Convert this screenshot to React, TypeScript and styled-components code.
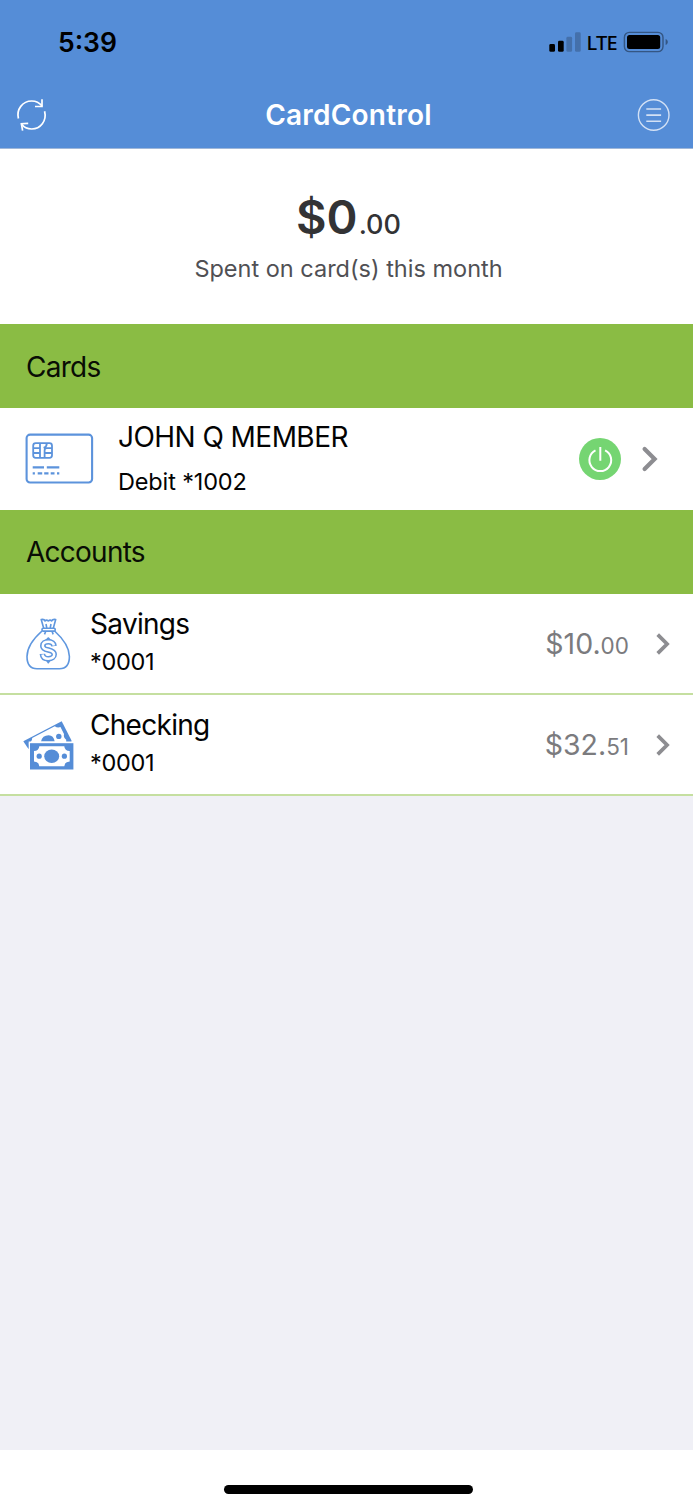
import React from "react";
import styled, { createGlobalStyle } from "styled-components";

const GlobalStyle = createGlobalStyle`
  *, *::before, *::after { box-sizing: border-box; }
  html, body { margin: 0; padding: 0; background: #fff; }
  body { font-family: Inter, "Liberation Sans", sans-serif; color: #030303; }
  svg { display: block; flex: none; }
`;

const Screen = styled.div`
  display: flex;
  flex-direction: column;
  width: 693px;
  height: 1500px;
  overflow: hidden;
  background: #f0f0f6;
`;

const Header = styled.header`
  height: 149px;
  flex: none;
  background: #558dd7;
  border-bottom: 1px solid #9fb7d9;
`;

const StatusBar = styled.div`
  display: flex;
  align-items: center;
  justify-content: space-between;
  height: 81px;
  padding: 3px 24px 0 58px;
  color: #000;
`;

const StatusIcons = styled.div`
  display: flex;
  align-items: center;
`;

const NavBar = styled.nav`
  display: flex;
  align-items: center;
  justify-content: space-between;
  height: 68px;
  padding: 0 22px 0 15px;
`;

const Text = styled.span<{ $size: number; $weight?: number; $track?: number; $color?: string; $line?: number }>`
  display: block;
  white-space: nowrap;
  font-size: ${(p) => p.$size}px;
  font-weight: ${(p) => p.$weight ?? 400};
  letter-spacing: ${(p) => p.$track ?? 0}px;
  line-height: ${(p) => p.$line ?? 34}px;
  color: ${(p) => p.$color ?? "inherit"};
`;

const NavTitle = styled(Text)`
  padding-left: 11px;
`;

const Carrier = styled(Text)`
  margin: 0 6px 0 5px;
  padding-top: 1px;
  font-family: "Noto Sans", sans-serif;
`;

const Summary = styled.section`
  display: flex;
  flex-direction: column;
  align-items: center;
  height: 175px;
  flex: none;
  padding: 38px 0 0 4px;
  background: #fff;
`;

const Money = styled.div<{ $top?: number; $gap?: number }>`
  display: flex;
  align-items: baseline;
  gap: ${(p) => p.$gap ?? 0}px;
  padding-top: ${(p) => p.$top ?? 0}px;
`;

const SectionHeader = styled.h2<{ $top: number }>`
  display: flex;
  align-items: center;
  height: 84px;
  flex: none;
  margin: 0;
  padding: ${(p) => p.$top}px 0 0 26px;
  background: #8abc44;
`;

const Row = styled.div<{ $height: number; $divided?: boolean; $inset?: number }>`
  display: flex;
  align-items: center;
  height: ${(p) => p.$height}px;
  flex: none;
  padding: 0 ${(p) => p.$inset ?? 22}px 0 24px;
  background: #fff;
  border-bottom: ${(p) => (p.$divided ? "2px solid #c5dfa0" : "none")};
`;

const IconSlot = styled.div<{ $width: number }>`
  display: flex;
  flex: none;
  width: ${(p) => p.$width}px;
`;

const Names = styled.div<{ $gap: number }>`
  display: flex;
  flex-direction: column;
  gap: ${(p) => p.$gap}px;
`;

const Trailing = styled.div<{ $gap: number }>`
  display: flex;
  align-items: center;
  gap: ${(p) => p.$gap}px;
  margin-left: auto;
`;

const HomeArea = styled.footer`
  display: flex;
  justify-content: center;
  height: 50px;
  flex: none;
  margin-top: auto;
  padding: 35px 0 0 4px;
  background: #fff;
`;

const HomeIndicator = styled.div`
  width: 249px;
  height: 9px;
  border-radius: 5px;
  background: #000;
`;

const SignalIcon = () => (
  <svg width="32" height="20" viewBox="0 0 32 20">
    <rect x="0.3" y="12" width="5.7" height="7.8" rx="1.4" />
    <rect x="9" y="8.8" width="5.7" height="11" rx="1.4" />
    <rect x="17.4" y="4.8" width="5.7" height="15" rx="1.4" fill="#4470ab" />
    <rect x="26" y="0.3" width="5.7" height="19.5" rx="1.4" fill="#4470ab" />
  </svg>
);

const BatteryIcon = () => (
  <svg width="46" height="22" viewBox="0 0 46 22">
    <rect x="1.4" y="1.4" width="38.6" height="19.2" rx="5" fill="none" stroke="#345683" strokeWidth="1.4" />
    <rect x="4" y="4" width="33.2" height="14" rx="2.5" />
    <path d="M42.6 8v6c1.4-.5 2.2-1.700 2.200-3s-.8-2.500-2.200-3z" fill="#345683" />
  </svg>
);

const RefreshIcon = () => (
  <svg width="34" height="36" viewBox="0 0 34 36" fill="none" stroke="#fff" strokeWidth="1.7">
    <path d="M3.400 21.500C1.200 12.500 7.500 4 16.700 4c4.300 0 8 2 10.300 5" />
    <path d="M27 2.200v7.300h-7" />
    <path d="M29.600 14.300C32 24 25.500 32 16.700 32c-4.200 0-7.800-1.700-10.200-5" />
    <path d="M7.600 33.700L6.400 26.700l6.800-.4" />
  </svg>
);

const MenuIcon = () => (
  <svg width="34" height="34" viewBox="0 0 34 34" fill="none" stroke="#d3e1f5">
    <circle cx="16.700" cy="17" r="15.300" strokeWidth="1.400" />
    <path d="M9.300 11h14.800M9.300 17.100h14.800M9.300 23.200h14.800" strokeWidth="1.600" />
  </svg>
);

const CardIcon = () => (
  <svg width="70" height="54" viewBox="0 0 70 54" fill="none" stroke="#5c93dc">
    <rect x="2.600" y="2.600" width="65.500" height="47.900" rx="3.500" strokeWidth="2.100" />
    <g strokeWidth="1.800">
      <rect x="9.200" y="11.200" width="18.800" height="14.600" rx="2.500" />
      <path d="M16 11.200v14.600M9.200 16.100H16M9.200 21H16M20.600 25.800V18.500q0-2.300 2.300-2.300H28M20.600 21H28M22.800 11.200q0 3.700-3.200 4.600" />
    </g>
    <path d="M8.700 35.400H20M22.800 35.400H35.300" strokeWidth="2.100" />
    <path d="M8.700 41.400h2.200M13.700 41.400h4.500M20.200 41.400h4.300M26.700 41.400h3.800M33 41.400h2.300" strokeWidth="2.100" />
  </svg>
);

const PowerIcon = () => (
  <svg width="42" height="42" viewBox="0 0 42 42" fill="none" stroke="#fff" strokeWidth="2">
    <circle cx="21" cy="21" r="21" fill="#75d572" stroke="none" />
    <path d="M21.300 9v13.700M16.500 12.400a10.900 10.900 0 1 0 9.600 0" />
  </svg>
);

const CardChevron = () => (
  <svg width="17" height="28" viewBox="0 0 17 28" fill="none" stroke="#8d8d91" strokeWidth="4.200">
    <path d="M3.600 4l10 10-10 10" strokeLinecap="round" />
  </svg>
);

const AccountChevron = () => (
  <svg width="16" height="24" viewBox="0 0 16 24" fill="none" stroke="#8d8d91" strokeWidth="3.700">
    <path d="M2.700 2.600l9.400 9.400-9.400 9.400" />
  </svg>
);

const MoneyBagIcon = () => (
  <svg width="48" height="54" viewBox="0 0 48 54" fill="none" stroke="#5f97df" strokeWidth="1.600" strokeLinejoin="round">
    <path d="M18 14C13.500 18 3 27.500 3 39.500C3 47 6.500 51.700 13 51.700h22.500c6.500 0 9.900-4.700 9.900-12.200C45.400 27.500 35 18 30.600 14" />
    <rect x="18" y="11.300" width="13.200" height="2.800" rx="1.200" />
    <path d="M19.700 11.300L17.200 2.500q3.300-.5 3.800 1.500q1.500-1.700 3.300 0q1.900-1.700 3.400 0q.7-2 4-1.500L29.300 11.300M22 7l.8 4M27 7l-.8 4M21.800 14.200l-1.300 3.200M28 14.200l1.200 3.200" />
    <path d="M20 24.200q2.800-.6 4.300-3.200q1.500 2.600 4.500 3.300M20 41.800q2.900.8 4.300 3.900q1.500-3.100 4.400-3.900" />
    <path d="M30.100 29.100c-.5-3-2.800-4.300-5.600-4.300c-3.400 0-5.700 1.500-5.700 4.100c0 5.600 11.400 2.700 11.400 8.400c0 2.800-2.400 4.400-5.900 4.400c-3.600 0-5.700-1.700-5.900-4.900" strokeWidth="5.600" />
    <path d="M29.900 28.400c-.5-2.500-2.600-3.600-5.400-3.600c-3.400 0-5.700 1.500-5.700 4.100c0 5.600 11.400 2.700 11.400 8.400c0 2.800-2.400 4.400-5.900 4.400c-3.400 0-5.500-1.500-5.800-4.200" stroke="#fff" strokeWidth="2.500" />
  </svg>
);

const CashIcon = () => (
  <svg width="52" height="54" viewBox="2 0 52 54" fill="#558dd7" overflow="visible">
    <path d="M1.300 23.200L39.700 3.200L49.500 22.400V30L6.300 30.800Z" />
    <path d="M8 29L6.600 25.700Q10.300 23.300 10.200 20L32.800 8.200Q35.500 10.300 38.500 9L42 16Q41.200 19.500 44.200 21.800V30Z" fill="#fff" />
    <path d="M19 23.400q1.300-6.200 7.700-6.200q4.800 0 6 6.200z" />
    <circle cx="36.800" cy="18.400" r="2.700" />
    <rect x="6.700" y="23.500" width="46" height="29" fill="#fff" />
    <rect x="8" y="25.200" width="43.400" height="26.300" />
    <path d="M17.300 28.300H42.300Q42.700 33 47.700 33.100V43.500Q42.700 43.700 42.300 48.200H17.300Q16.900 43.700 12 43.500V33.100Q16.900 33 17.300 28.300Z" fill="#fff" />
    <ellipse cx="29.700" cy="38.200" rx="7.500" ry="6.700" />
    <circle cx="17.200" cy="38.200" r="2.600" />
    <circle cx="42.400" cy="38.200" r="2.600" />
  </svg>
);

type AccountProps = {
  icon: React.ReactNode;
  name: string;
  number: string;
  whole: string;
  cents: string;
};

const AccountRow = ({ icon, name, number, whole, cents }: AccountProps) => (
  <Row $height={101} $divided>
    <IconSlot $width={66}>{icon}</IconSlot>
    <Names $gap={4}>
      <Text $size={28} $track={-0.7} $line={33}>{name}</Text>
      <Text $size={23.5} $track={-0.3}>{number}</Text>
    </Names>
    <Trailing $gap={26}>
      <Money $top={3}>
        <Text $size={28.5} $color="#7b7b7e">{whole}</Text>
        <Text $size={22.5} $color="#7b7b7e">{cents}</Text>
      </Money>
      <AccountChevron />
    </Trailing>
  </Row>
);

const App = () => (
  <Screen>
    <GlobalStyle />
    <Header>
      <StatusBar>
        <Text $size={26.5} $weight={600}>5:39</Text>
        <StatusIcons>
          <SignalIcon />
          <Carrier $size={20} $weight={500} $track={-0.7}>LTE</Carrier>
          <BatteryIcon />
        </StatusIcons>
      </StatusBar>
      <NavBar>
        <RefreshIcon />
        <NavTitle $size={28} $weight={600} $track={0.2} $color="#fff">CardControl</NavTitle>
        <MenuIcon />
      </NavBar>
    </Header>
    <Summary>
      <Money $gap={1}>
        <Text $size={47} $weight={600} $color="#333335" $line={60}>$0</Text>
        <Text $size={27} $weight={500} $color="#333335" $line={60}>.00</Text>
      </Money>
      <Text $size={23.5} $line={28} $color="#505054">Spent on card(s) this month</Text>
    </Summary>
    <SectionHeader $top={1}>
      <Text $size={28} $track={-0.75} $color="#090d05">Cards</Text>
    </SectionHeader>
    <Row $height={102} $inset={35}>
      <IconSlot $width={94}>
        <CardIcon />
      </IconSlot>
      <Names $gap={11}>
        <Text $size={28} $track={-0.55}>JOHN Q MEMBER</Text>
        <Text $size={23.5} $track={-0.15}>Debit *1002</Text>
      </Names>
      <Trailing $gap={20}>
        <PowerIcon />
        <CardChevron />
      </Trailing>
    </Row>
    <SectionHeader $top={0}>
      <Text $size={28} $track={-0.75} $line={33} $color="#090d05">Accounts</Text>
    </SectionHeader>
    <AccountRow icon={<MoneyBagIcon />} name="Savings" number="*0001" whole="$10." cents="00" />
    <AccountRow icon={<CashIcon />} name="Checking" number="*0001" whole="$32." cents="51" />
    <HomeArea>
      <HomeIndicator />
    </HomeArea>
  </Screen>
);

export default App;
